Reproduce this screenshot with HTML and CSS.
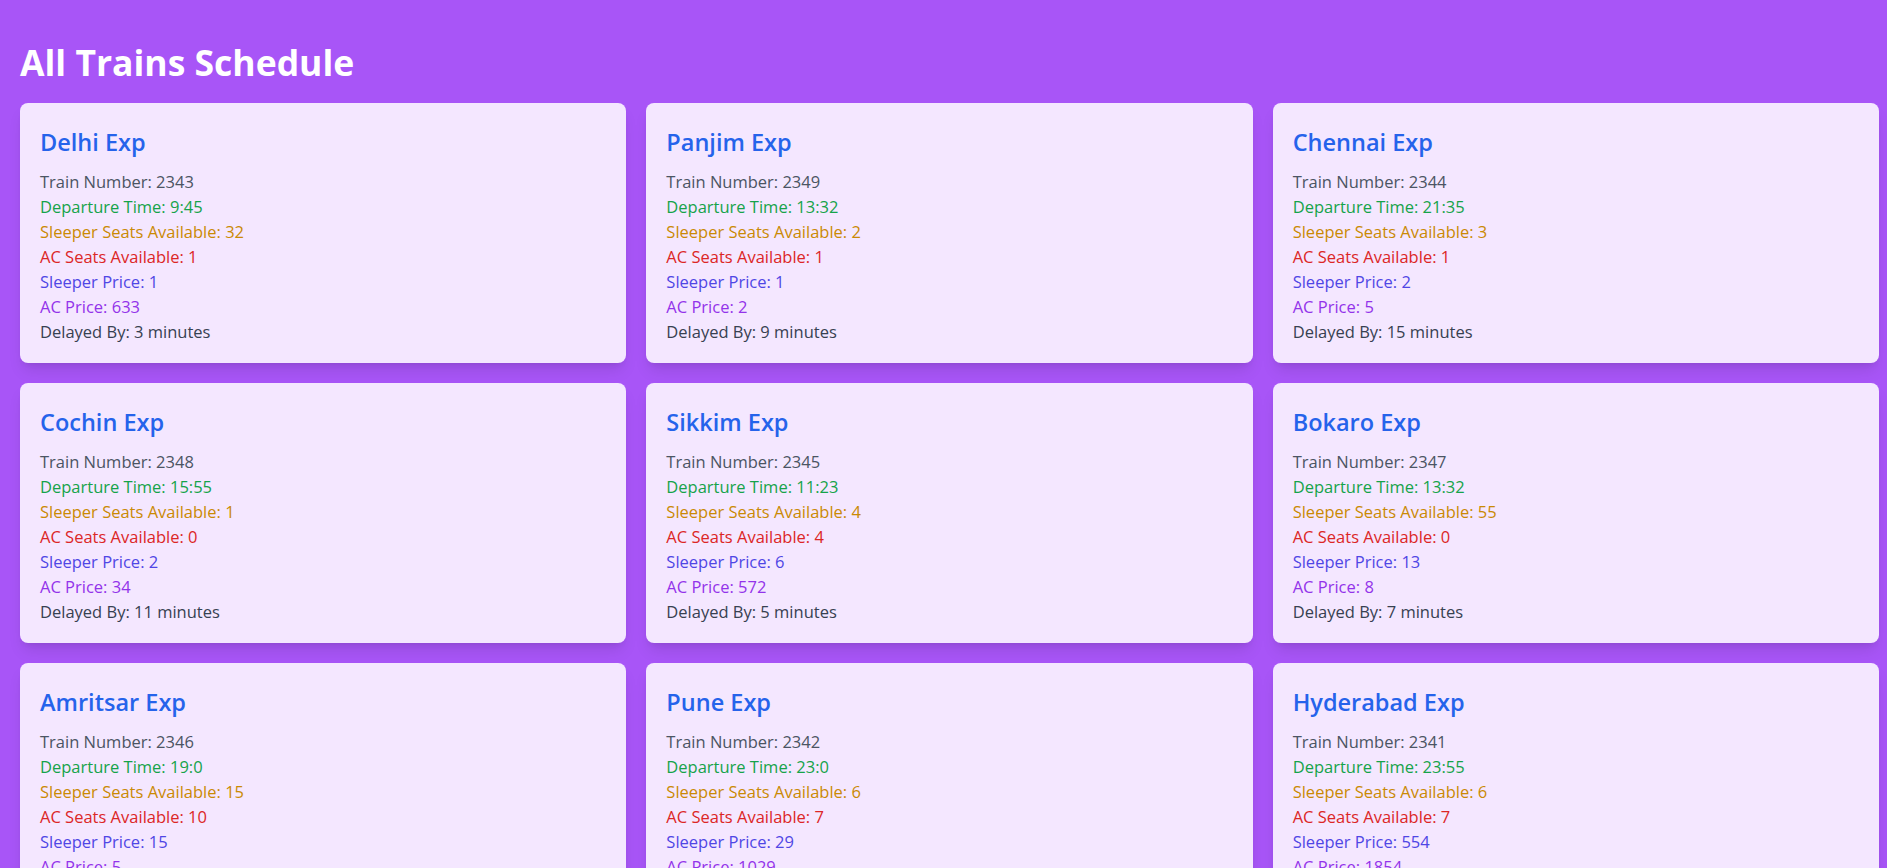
FILE: index.html
```html
<!DOCTYPE html>
<html lang="en">
<head>
<meta charset="utf-8">
<title>All Trains Schedule</title>
<link rel="stylesheet" href="styles.css">
</head>
<body>
<main class="page">
  <h1 class="page-title">All Trains Schedule</h1>
  <div class="grid">
    <div class="card">
      <h2 class="card-title">Delhi Exp</h2>
      <p class="row num">Train Number: 2343</p>
      <p class="row dep">Departure Time: 9:45</p>
      <p class="row sleeper">Sleeper Seats Available: 32</p>
      <p class="row ac">AC Seats Available: 1</p>
      <p class="row sprice">Sleeper Price: 1</p>
      <p class="row acprice">AC Price: 633</p>
      <p class="row delay">Delayed By: 3 minutes</p>
    </div>
    <div class="card">
      <h2 class="card-title">Panjim Exp</h2>
      <p class="row num">Train Number: 2349</p>
      <p class="row dep">Departure Time: 13:32</p>
      <p class="row sleeper">Sleeper Seats Available: 2</p>
      <p class="row ac">AC Seats Available: 1</p>
      <p class="row sprice">Sleeper Price: 1</p>
      <p class="row acprice">AC Price: 2</p>
      <p class="row delay">Delayed By: 9 minutes</p>
    </div>
    <div class="card">
      <h2 class="card-title">Chennai Exp</h2>
      <p class="row num">Train Number: 2344</p>
      <p class="row dep">Departure Time: 21:35</p>
      <p class="row sleeper">Sleeper Seats Available: 3</p>
      <p class="row ac">AC Seats Available: 1</p>
      <p class="row sprice">Sleeper Price: 2</p>
      <p class="row acprice">AC Price: 5</p>
      <p class="row delay">Delayed By: 15 minutes</p>
    </div>
    <div class="card">
      <h2 class="card-title">Cochin Exp</h2>
      <p class="row num">Train Number: 2348</p>
      <p class="row dep">Departure Time: 15:55</p>
      <p class="row sleeper">Sleeper Seats Available: 1</p>
      <p class="row ac">AC Seats Available: 0</p>
      <p class="row sprice">Sleeper Price: 2</p>
      <p class="row acprice">AC Price: 34</p>
      <p class="row delay">Delayed By: 11 minutes</p>
    </div>
    <div class="card">
      <h2 class="card-title">Sikkim Exp</h2>
      <p class="row num">Train Number: 2345</p>
      <p class="row dep">Departure Time: 11:23</p>
      <p class="row sleeper">Sleeper Seats Available: 4</p>
      <p class="row ac">AC Seats Available: 4</p>
      <p class="row sprice">Sleeper Price: 6</p>
      <p class="row acprice">AC Price: 572</p>
      <p class="row delay">Delayed By: 5 minutes</p>
    </div>
    <div class="card">
      <h2 class="card-title">Bokaro Exp</h2>
      <p class="row num">Train Number: 2347</p>
      <p class="row dep">Departure Time: 13:32</p>
      <p class="row sleeper">Sleeper Seats Available: 55</p>
      <p class="row ac">AC Seats Available: 0</p>
      <p class="row sprice">Sleeper Price: 13</p>
      <p class="row acprice">AC Price: 8</p>
      <p class="row delay">Delayed By: 7 minutes</p>
    </div>
    <div class="card">
      <h2 class="card-title">Amritsar Exp</h2>
      <p class="row num">Train Number: 2346</p>
      <p class="row dep">Departure Time: 19:0</p>
      <p class="row sleeper">Sleeper Seats Available: 15</p>
      <p class="row ac">AC Seats Available: 10</p>
      <p class="row sprice">Sleeper Price: 15</p>
      <p class="row acprice">AC Price: 5</p>
      <p class="row delay">Delayed By: 2 minutes</p>
    </div>
    <div class="card">
      <h2 class="card-title">Pune Exp</h2>
      <p class="row num">Train Number: 2342</p>
      <p class="row dep">Departure Time: 23:0</p>
      <p class="row sleeper">Sleeper Seats Available: 6</p>
      <p class="row ac">AC Seats Available: 7</p>
      <p class="row sprice">Sleeper Price: 29</p>
      <p class="row acprice">AC Price: 1029</p>
      <p class="row delay">Delayed By: 4 minutes</p>
    </div>
    <div class="card">
      <h2 class="card-title">Hyderabad Exp</h2>
      <p class="row num">Train Number: 2341</p>
      <p class="row dep">Departure Time: 23:55</p>
      <p class="row sleeper">Sleeper Seats Available: 6</p>
      <p class="row ac">AC Seats Available: 7</p>
      <p class="row sprice">Sleeper Price: 554</p>
      <p class="row acprice">AC Price: 1854</p>
      <p class="row delay">Delayed By: 6 minutes</p>
    </div>
  </div>
</main>
</body>
</html>
```
FILE: styles.css
```css
* { box-sizing: border-box; }
html, body {
  margin: 0;
  padding: 0;
  background: #a855f7;
  font-family: "Open Sans", "Noto Sans", sans-serif;
}
.page {
  padding: 20px 8px 20px 20px;
}
.page-title {
  margin: 22px 0 21px;
  font-size: 35.5px;
  line-height: 40px;
  font-weight: 700;
  color: #ffffff;
}
.grid {
  display: grid;
  grid-template-columns: repeat(3, 1fr);
  gap: 20px;
}
.card {
  background: #f4e7ff;
  border-radius: 8px;
  padding: 20px 20px 19px 20px;
  box-shadow: 0 10px 15px -3px rgba(0,0,0,0.1), 0 4px 6px -4px rgba(0,0,0,0.1);
}
.card-title {
  margin: 0 0 8px;
  font-size: 23.5px;
  line-height: 38px;
  font-weight: 600;
  color: #2563eb;
}
.row {
  margin: 0;
  font-size: 16.5px;
  line-height: 25px;
}
.num { color: #4b5563; }
.dep { color: #16a34a; }
.sleeper { color: #ca8a04; }
.ac { color: #dc2626; }
.sprice { color: #4f46e5; }
.acprice { color: #9333ea; }
.delay { color: #374151; }
```
